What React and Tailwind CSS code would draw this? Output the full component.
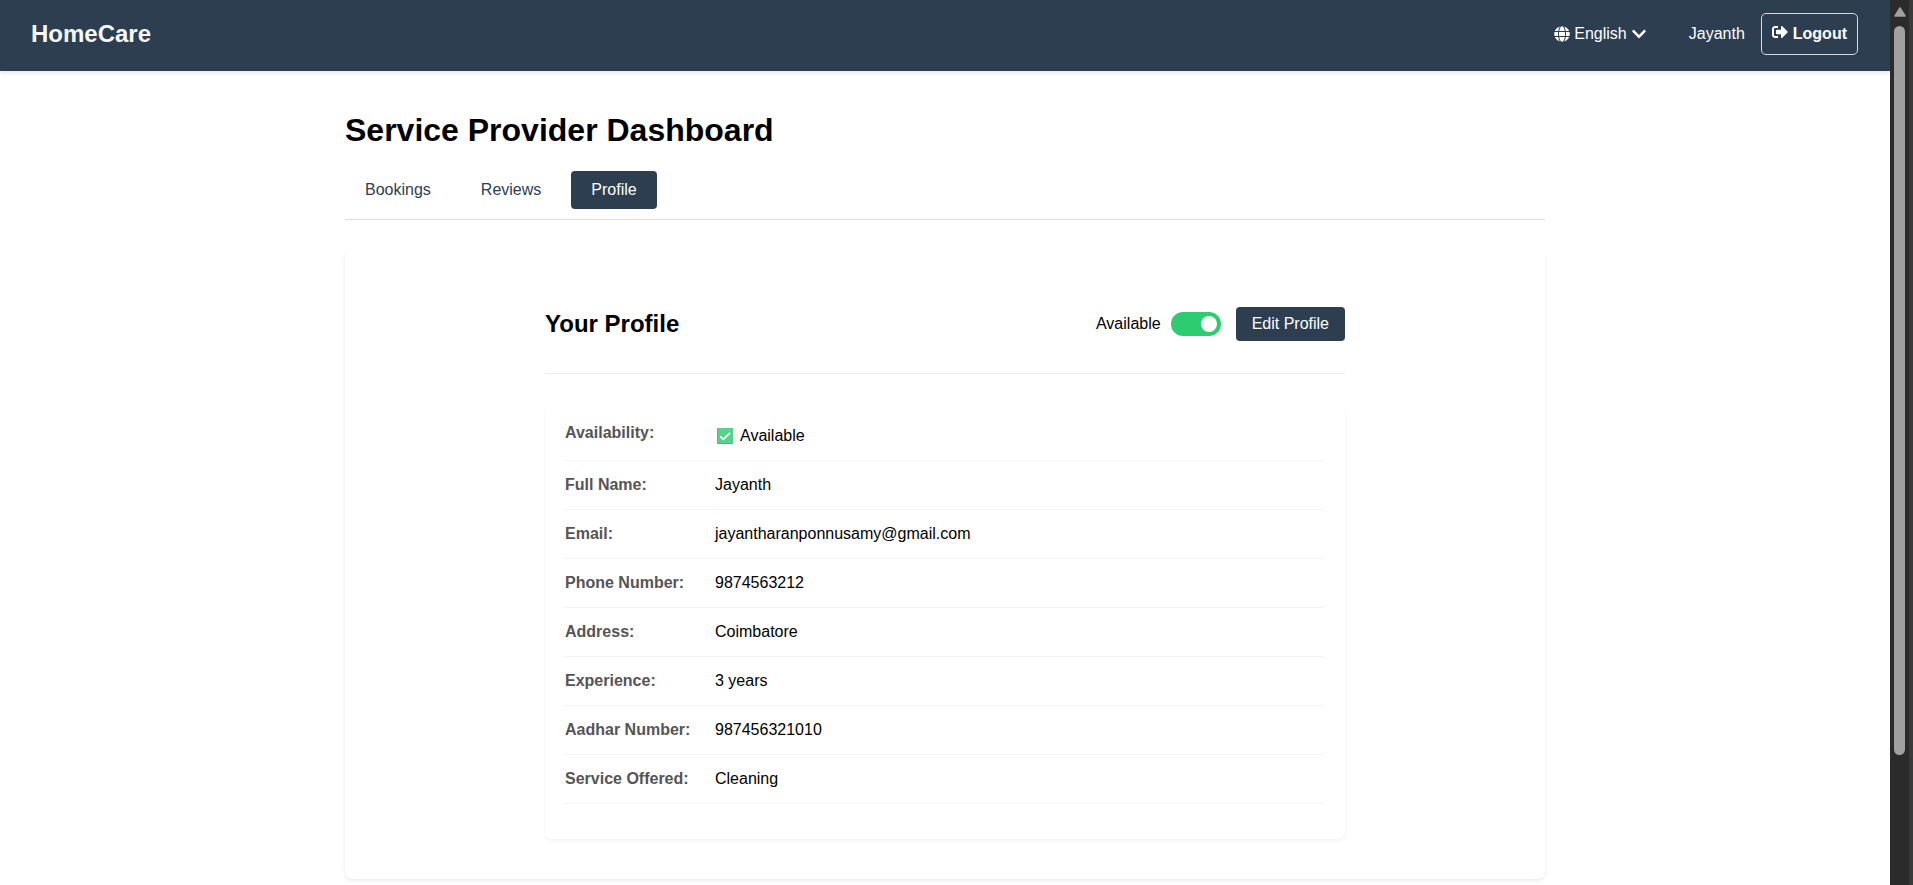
import { useState } from "react";
import { FaChevronDown, FaGlobe, FaSignOutAlt } from "react-icons/fa";

const tabs = ["Bookings", "Reviews", "Profile"];

const details = [
  ["Full Name:", "Jayanth"],
  ["Email:", "jayantharanponnusamy@gmail.com"],
  ["Phone Number:", "9874563212"],
  ["Address:", "Coimbatore"],
  ["Experience:", "3 years"],
  ["Aadhar Number:", "987456321010"],
  ["Service Offered:", "Cleaning"],
];

function CheckBadge() {
  return (
    <svg viewBox="0 0 16 16" className="h-4 w-4" aria-hidden="true">
      <rect width="16" height="16" rx="1" fill="#4fb583" />
      <rect x="1" width="15" height="15" rx="1" fill="#56d28c" />
      <path d="M3.2 8.4 6.4 11.4 13 4.8" fill="none" stroke="#fff" strokeWidth="1.7" />
    </svg>
  );
}

function Header() {
  return (
    <header className="flex items-center justify-between bg-[#2d3e50] pt-[13px] pr-8 pb-4 pl-[31px] text-white shadow-[0_2px_4px_rgba(0,0,60,0.1)]">
      <a href="#home" className="text-2xl leading-7 font-bold text-[#f5f8ff]">HomeCare</a>
      <div className="flex items-center">
        <button type="button" className="mr-[42px] flex items-center gap-1">
          <FaGlobe />
          <span>English</span>
          <FaChevronDown className="h-4 w-4" />
        </button>
        <span className="mr-4">Jayanth</span>
        <button type="button" className="flex h-[42px] items-center gap-[5px] rounded-[5px] border border-[#d5dae0] px-[10px] font-bold">
          <FaSignOutAlt className="mb-1" />
          <span>Logout</span>
        </button>
      </div>
    </header>
  );
}

function DetailRow({ label, children }) {
  return (
    <div className="flex border-b border-[#f3f3f3] py-[15px]">
      <dt className="w-[150px] shrink-0 font-bold text-[#555]">{label}</dt>
      <dd className="min-w-0 flex-1">{children}</dd>
    </div>
  );
}

function Scrollbar() {
  return (
    <div className="flex w-[23px] shrink-0 border-r-4 border-[#3a3a3a] bg-[#2b2b2b]" aria-hidden="true">
      <div className="flex w-[19px] flex-col items-center pt-[7px]">
        <svg viewBox="0 0 12 10" className="h-[10px] w-3 shrink-0">
          <path d="M6 1 11 9H1Z" fill="#a0a0a0" stroke="#a0a0a0" strokeWidth="1.5" strokeLinejoin="round" />
        </svg>
        <div className="mt-[9px] h-[83%] w-[11px] rounded-full bg-[#a0a0a0]" />
      </div>
    </div>
  );
}

export default function App() {
  const [tab, setTab] = useState("Profile");
  const [available, setAvailable] = useState(true);

  return (
    <div className="flex h-screen overflow-hidden bg-white font-['Liberation_Sans',Arial,sans-serif] text-base leading-[18px] text-black">
      <div className="min-w-0 flex-1 overflow-hidden">
        <Header />
        <main className="mx-auto max-w-[1200px] pt-[41px]">
          <h1 className="text-[32px] leading-9 font-bold">Service Provider Dashboard</h1>
          <nav className="mt-[23px] flex gap-[10px] border-b border-[#ddd] pb-[10px]">
            {tabs.map((name) => (
              <button
                key={name}
                type="button"
                onClick={() => setTab(name)}
                className={
                  name === tab
                    ? "rounded bg-[#2d3e50] px-5 py-[10px] text-white"
                    : "rounded px-5 py-[10px] text-[#2d3e50]"
                }
              >
                {name}
              </button>
            ))}
          </nav>
          <section className="mt-[30px] rounded-lg bg-white px-5 pt-[57px] pb-10 shadow-[0_2px_4px_rgba(0,0,0,0.08)]">
            <div className="mx-auto max-w-[800px]">
              <div className="flex items-center justify-between border-b border-[#eee] pb-8">
                <h2 className="text-2xl leading-7 font-bold">Your Profile</h2>
                <div className="flex items-center gap-[15px]">
                  <label className="flex cursor-pointer items-center gap-[10px]">
                    <span>Available</span>
                    <input
                      type="checkbox"
                      role="switch"
                      checked={available}
                      onChange={(e) => setAvailable(e.target.checked)}
                      className="flex h-6 w-[50px] appearance-none items-center rounded-full bg-[#ccc] px-1 before:h-4 before:w-4 before:rounded-full before:bg-white checked:justify-end checked:bg-[#2ecc71]"
                    />
                  </label>
                  <button type="button" className="rounded bg-[#2d3e50] px-4 py-2 text-white">Edit Profile</button>
                </div>
              </div>
              <dl className="mt-[30px] rounded-lg bg-white px-5 pt-[5px] pb-[35px] shadow-[0_2px_4px_rgba(0,0,0,0.05)]">
                <DetailRow label="Availability:">
                  <span className="flex items-center gap-[7px] pt-[3px] pl-[2px]">
                    <CheckBadge />
                    Available
                  </span>
                </DetailRow>
                {details.map(([label, value]) => (
                  <DetailRow key={label} label={label}>{value}</DetailRow>
                ))}
              </dl>
            </div>
          </section>
        </main>
      </div>
      <Scrollbar />
    </div>
  );
}
